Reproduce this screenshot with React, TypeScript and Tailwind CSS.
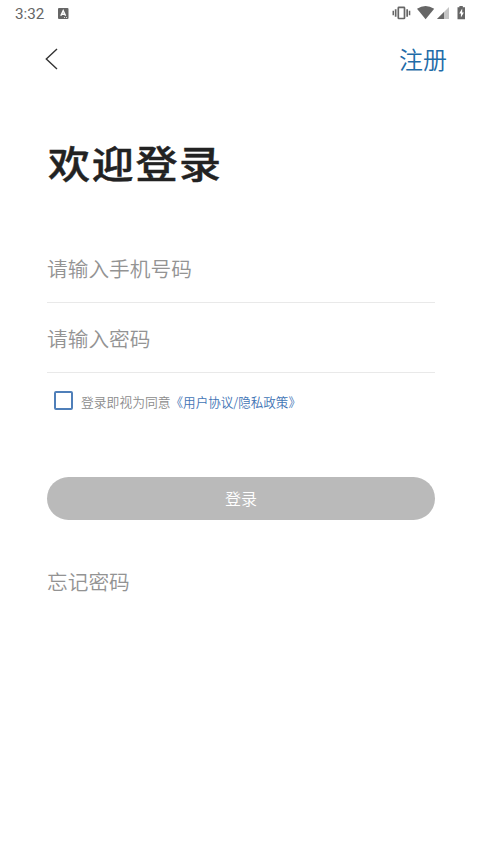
import React from "react";

function StatusBar() {
  return (
    <div className="flex h-[26px] items-center justify-between pl-[15px] pr-[15px] text-[#666666]">
      <div className="flex items-center gap-[14px]">
        <span className="pt-[2px] font-[Roboto,sans-serif] text-[15.2px] leading-[24px]">3:32</span>
        <svg className="block" width="11" height="11" viewBox="0 0 11 11">
          <rect width="10.5" height="11" rx="1" fill="#666" />
          <path d="M2.8 7.8 5.2 2.6 7.6 7.8M3.6 6.2h3.2" fill="none" stroke="#fff" strokeWidth="1.4" />
          <path d="M6 9.5h1M8 9.5h1" stroke="#ddd" strokeWidth="1" />
        </svg>
      </div>
      <svg className="block" width="74" height="16" viewBox="392 5 74 16">
        <g fill="#666">
          <path d="M392.5 10.8h1.5v4.4h-1.5zM394.8 9.2h1.7v7.6h-1.7zM406.3 9.2h1.7v7.6h-1.7zM408.8 10.8h1.5v4.4h-1.5z" />
          <rect x="398.3" y="7.3" width="6.2" height="11.2" rx="0.6" fill="none" stroke="#666" strokeWidth="1.7" />
          <path d="M417 8.8Q425.5 3.3 434.2 8.8L425.6 19.2Z" />
          <path d="M449 7v12h-12z" fill="#c4c4c4" />
          <path d="M444 12v7h-7z" />
          <path d="M459.4 6h3.4v1.2h2.2V19.2h-7.5V7.2h1.9z" />
        </g>
        <path d="M462.2 8.6l-3 5h1.7v4l3-5.2h-1.7z" fill="#fff" />
      </svg>
    </div>
  );
}

function Field({ label }: { label: string }) {
  return (
    <div className="flex h-[70px] items-end border-b border-[#e9e9e9] pb-[18px]">
      <span className="text-[20.7px] leading-[32px] font-[350] text-[#939393]">{label}</span>
    </div>
  );
}

export default function App() {
  return (
    <div className="flex h-[856px] w-[481px] flex-col overflow-hidden bg-white font-['Noto_Sans_CJK_SC',sans-serif]">
      <StatusBar />
      <header className="flex h-[66px] items-center justify-between pl-[45px] pr-[34px]">
        <svg className="block" width="14" height="22" viewBox="0 0 14 22" fill="none" stroke="#333" strokeWidth="1.4">
          <path d="M12 1 1.3 11 12 21" />
        </svg>
        <span className="mb-px text-[24px] leading-[36px] font-[350] text-[#1f6ca8]">注册</span>
      </header>
      <main className="flex flex-col pl-[47px] pr-[46px]">
        <h1 className="mt-[38px] h-[64px] origin-center scale-y-[0.9] pl-px text-[42px] leading-[64px] font-medium tracking-[1.7px] text-[#222222] [-webkit-text-stroke:0.5px_#222222]">欢迎登录</h1>
        <div className="mt-[39px]">
          <Field label="请输入手机号码" />
          <Field label="请输入密码" />
        </div>
        <div className="mt-[17px] flex h-[21px] items-center pl-[7px] font-[350]">
          <span className="mr-[8px] h-[19px] w-[19px] rounded-[2px] border-2 border-[#4f7fb9]" />
          <p className="pt-px text-[12.8px] leading-[19px] text-[#8c8c8c]">
            登录即视为同意<span className="text-[12.55px] text-[#3f74b5]">《用户协议/隐私政策》</span>
          </p>
        </div>
        <button className="mt-[66px] h-[43px] rounded-full bg-[#bababa] pb-[2px] text-[16px] font-[350] text-white">登录</button>
        <span className="mt-[45px] text-[20.7px] leading-[32px] font-[350] text-[#939393]">忘记密码</span>
      </main>
    </div>
  );
}
